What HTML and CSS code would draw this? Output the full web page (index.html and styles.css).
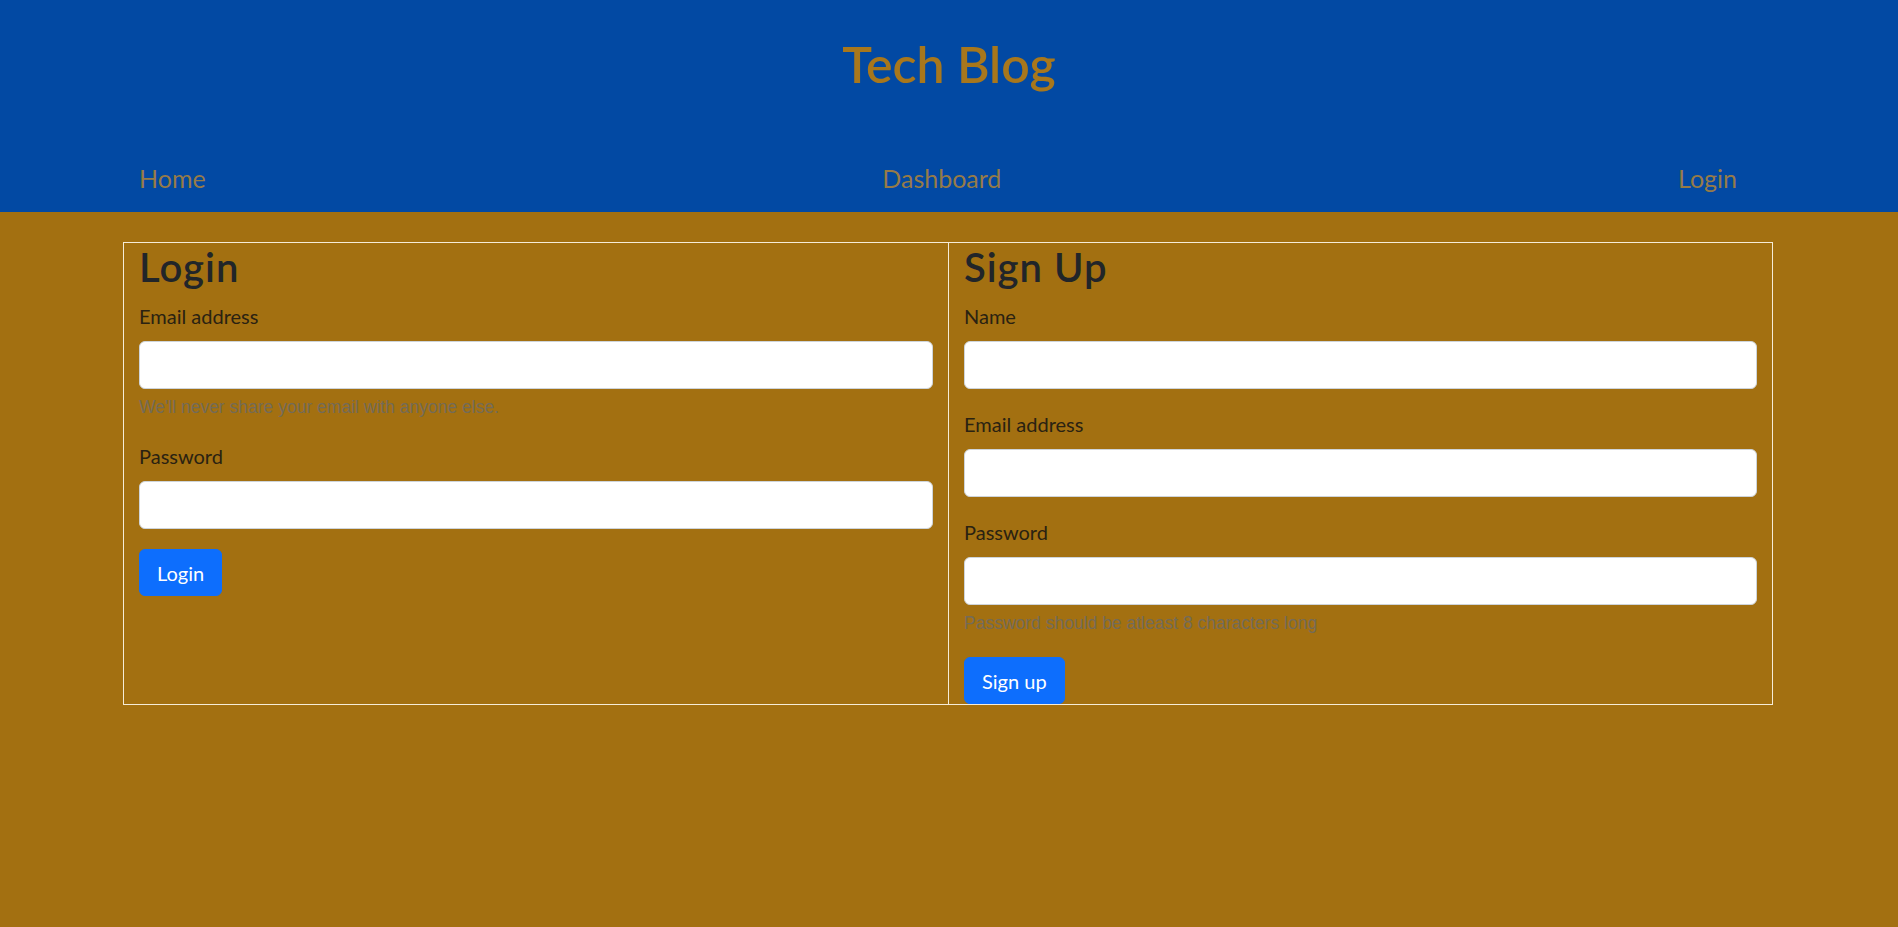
FILE: index.html
```html
<!DOCTYPE html>
<html lang="en">
<head>
<meta charset="utf-8">
<title>Tech Blog</title>
<link rel="stylesheet" href="styles.css">
</head>
<body>
<header class="site-header">
  <h1 class="site-title">Tech Blog</h1>
  <nav class="site-nav">
    <a class="nav-link" href="#">Home</a>
    <a class="nav-link" href="#">Dashboard</a>
    <a class="nav-link" href="#">Login</a>
  </nav>
</header>
<main class="auth">
  <section class="auth-col">
    <h2 class="auth-title">Login</h2>
    <form class="auth-form">
      <div class="field">
        <label class="field-label" for="login-email">Email address</label>
        <input class="field-input" type="email" id="login-email">
        <div class="field-help">We'll never share your email with anyone else.</div>
      </div>
      <div class="field">
        <label class="field-label" for="login-password">Password</label>
        <input class="field-input" type="password" id="login-password">
      </div>
      <button class="btn" type="submit">Login</button>
    </form>
  </section>
  <section class="auth-col">
    <h2 class="auth-title">Sign Up</h2>
    <form class="auth-form">
      <div class="field">
        <label class="field-label" for="signup-name">Name</label>
        <input class="field-input" type="text" id="signup-name">
      </div>
      <div class="field">
        <label class="field-label" for="signup-email">Email address</label>
        <input class="field-input" type="email" id="signup-email">
      </div>
      <div class="field">
        <label class="field-label" for="signup-password">Password</label>
        <input class="field-input" type="password" id="signup-password">
        <div class="field-help">Password should be atleast 8 characters long</div>
      </div>
      <button class="btn" type="submit">Sign up</button>
    </form>
  </section>
</main>
</body>
</html>
```

FILE: styles.css
```css
* { box-sizing: border-box; }

html, body {
  margin: 0;
  padding: 0;
}

body {
  background: #a37011;
  color: #212529;
  font-family: Lato, "Open Sans", "Noto Sans", sans-serif;
  font-size: 20px;
  line-height: 1.5;
  min-height: 927px;
}

.site-header {
  background: #0249a3;
  height: 212px;
  padding-top: 34px;
}

.site-title {
  margin: 0;
  text-align: center;
  font-size: 50px;
  line-height: 60px;
  font-weight: 600;
  color: #a8771c;
}

.site-nav {
  margin: 66px 145px 0 123px;
  display: flex;
  justify-content: space-between;
}

.nav-link {
  padding: 0 16px;
  font-size: 25px;
  line-height: 36px;
  color: #967b48;
  text-decoration: none;
}

.auth {
  margin: 30px 0 0 123px;
  width: 1650px;
  border: 1px solid #f6ecd8;
  display: grid;
  grid-template-columns: 1fr 1fr;
}

.auth-col {
  padding: 0 15px;
}

.auth-col + .auth-col {
  border-left: 1px solid #f6ecd8;
}

.auth-title {
  margin: 0 0 10px;
  font-size: 40px;
  line-height: 48px;
  font-weight: 600;
  letter-spacing: 1px;
  color: #212529;
}

.field {
  margin-bottom: 20px;
}

.field-label {
  display: block;
  margin-bottom: 10px;
  line-height: 30px;
  color: #2a2212;
}

.field-input {
  display: block;
  width: 100%;
  height: 48px;
  padding: 7px 15px;
  border: 1px solid #ced4da;
  border-radius: 6px;
  background: #fff;
  font: inherit;
}

.field-help {
  margin-top: 5px;
  font-family: "Liberation Sans", Arial, sans-serif;
  font-size: 17.5px;
  line-height: 27px;
  color: #736b58;
}

.btn {
  display: inline-block;
  vertical-align: top;
  height: 47px;
  padding: 0 17px;
  border: 1px solid #0d6efd;
  border-radius: 6px;
  background: #0d6efd;
  color: #fff;
  font-family: inherit;
  font-size: 20px;
  line-height: 30px;
}
```
